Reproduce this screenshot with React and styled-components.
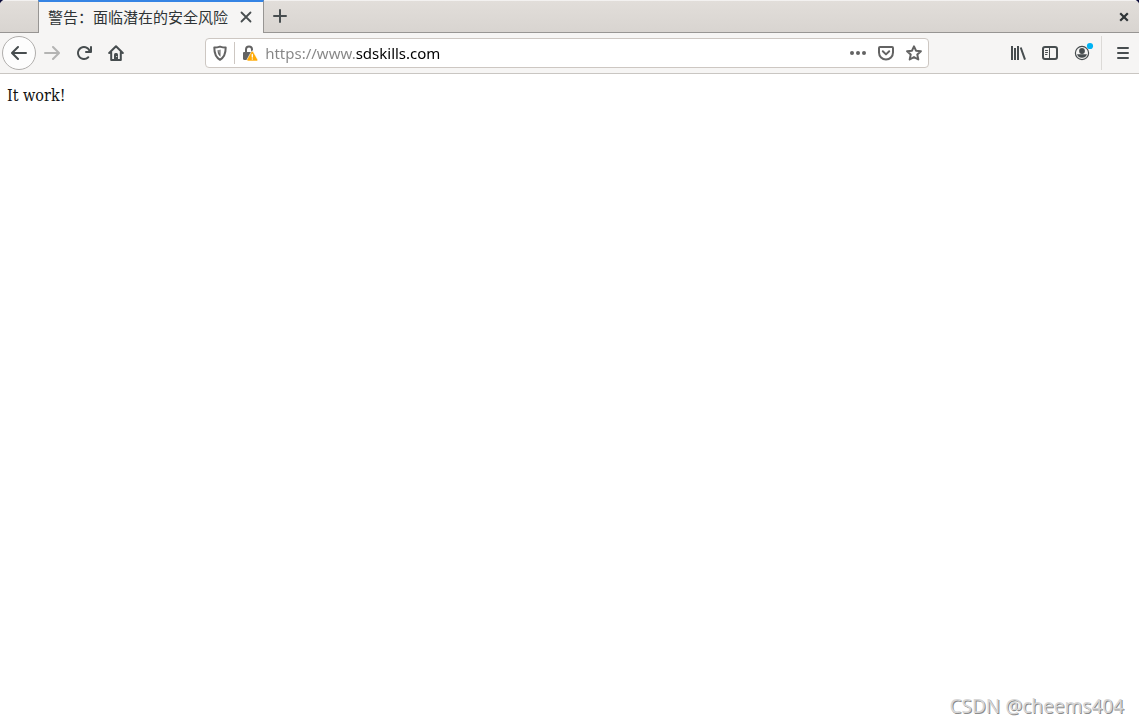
import React, { useState } from "react";
import styled, { createGlobalStyle, css } from "styled-components";

const GlobalStyle = createGlobalStyle`
  * {
    box-sizing: border-box;
  }
  body {
    margin: 0;
    background-color: #ffffff;
  }
`;

const Browser = styled.div`
  position: relative;
  min-height: 100vh;
  display: flex;
  flex-direction: column;
  font-family: "Noto Sans", "Noto Sans CJK SC", sans-serif;
  color: #2e3436;
`;

const TabBar = styled.header`
  height: 33px;
  display: flex;
  background: linear-gradient(#e2deda, #d8d4d0);
  box-shadow: inset 0 1px #f3f1f0, inset 0 -1px #979593;
`;

/* dark desktop showing behind the rounded window corners */
const Corners = styled.div`
  position: absolute;
  inset: 0 0 auto 0;
  height: 6px;
  pointer-events: none;
  background: radial-gradient(circle at 6px 6px, transparent 6px, #0b0b3b 7px)
      left / 6px 6px no-repeat,
    radial-gradient(circle at 0 6px, transparent 6px, #0b0b3b 7px) right / 6px
      6px no-repeat;
`;

const DragSpace = styled.div`
  width: 38px;
`;

const Tab = styled.div`
  width: 226px;
  display: flex;
  align-items: center;
  padding: 0 5px 2px 9px;
  background-color: #f6f5f4;
  border-top: 2px solid #3584e4;
  border-left: 1px solid #979593;
  border-right: 1px solid #979593;
`;

const TabTitle = styled.span`
  flex: 1;
  font-size: 15px;
  line-height: 24px;
  white-space: nowrap;
`;

const IconButton = styled.button`
  flex: none;
  width: ${(props) => props.$size || 32}px;
  height: ${(props) => props.$size || 32}px;
  display: flex;
  justify-content: center;
  align-items: center;
  padding: 0;
  border: none;
  background: none;
  color: ${(props) => props.$color || "#474d4f"};
  ${(props) =>
    props.$round &&
    css`
      margin-left: 2px;
      border: 1px solid #b0aeac;
      border-radius: 50%;
      background-color: #fdfdfd;
    `}
  &:disabled {
    color: #b4b4b3;
  }
`;

const WindowClose = styled(IconButton)`
  width: 30px;
  height: 33px;
  margin-left: auto;
  color: #2e3436;
`;

const NavBar = styled.nav`
  height: 41px;
  display: flex;
  align-items: center;
  background-color: #f6f5f4;
  border-bottom: 1px solid #c9c6c2;
`;

const Spacer = styled.div`
  flex: 1;
`;

const UrlBar = styled.form`
  flex: 10;
  height: 30px;
  display: flex;
  align-items: center;
  margin: 0 1px;
  border: 1px solid #cdc7c2;
  border-radius: 4px;
  background-color: #ffffff;
`;

const UrlDivider = styled.span`
  width: 1px;
  height: 22px;
  background-color: #cdc7c2;
`;

/* the sub-domain part is dimmed, the domain itself stays dark */
const UrlInput = styled.input`
  flex: 1;
  min-width: 0;
  height: 28px;
  padding: 0;
  border: none;
  outline: none;
  font-family: inherit;
  font-size: 15px;
  color: transparent;
  caret-color: #000000;
  background: linear-gradient(90deg, #858585 90px, #000000 90px);
  background-clip: text;
  -webkit-background-clip: text;
`;

const Separator = styled.span`
  width: 1px;
  height: 34px;
  margin: 0 5px 0 3px;
  background-color: #dcdad7;
`;

const Page = styled.main`
  flex: 1;
  padding: 10px 7px;
  font-family: "DejaVu Serif Condensed", "Liberation Serif", serif;
  font-size: 16px;
  line-height: 24px;
  color: #111111;
`;

const Watermark = styled.span`
  position: absolute;
  right: 15px;
  bottom: 4px;
  font-size: 19px;
  line-height: 28px;
  color: #d6d6d6;
  text-shadow: 1px 1px #8c8c8c;
`;

const Icon = ({ size = 16, children }) => (
  <svg
    width={size}
    height={size}
    viewBox="0 0 16 16"
    fill="none"
    stroke="currentColor"
    strokeWidth="2"
    strokeLinecap="round"
    strokeLinejoin="round"
    aria-hidden="true"
  >
    {children}
  </svg>
);

const BackIcon = () => (
  <Icon>
    <path d="M15 8H1.5M7 2L1 8l6 6" />
  </Icon>
);

const ForwardIcon = () => (
  <Icon>
    <path d="M1 8h13.5M9 2l6 6-6 6" />
  </Icon>
);

const ReloadIcon = () => (
  <Icon>
    <path
      stroke="none"
      fill="currentColor"
      d="M15 1a1 1 0 0 0-1 1v2.418A6.995 6.995 0 1 0 8 15a6.954 6.954 0 0 0 4.95-2.05 1 1 0 0 0-1.414-1.414A5.019 5.019 0 1 1 12.549 6H10a1 1 0 0 0 0 2h5a1 1 0 0 0 1-1V2a1 1 0 0 0-1-1z"
    />
  </Icon>
);

const HomeIcon = () => (
  <Icon>
    <path d="M1.2 8L8 1.3 14.8 8M3.2 7.5V15h9.6V7.5" />
    <path
      stroke="none"
      fill="currentColor"
      d="M6 15V9.5A1.5 1.5 0 0 1 7.5 8h1A1.5 1.5 0 0 1 10 9.5V15z"
    />
    <circle cx="8.7" cy="11.5" r=".6" stroke="none" fill="#f6f5f4" />
  </Icon>
);

const ShieldIcon = () => (
  <Icon>
    <path d="M8 1.6c2 .6 3.8.9 5.700 1 0 6-1.400 9.900-5.700 12.200C3.700 12.500 2.300 8.600 2.300 2.600 4.200 2.500 6 2.200 8 1.600z" />
    <path
      stroke="none"
      fill="currentColor"
      d="M8.500 4.600v7.200C6.500 10.300 5.700 8.500 5.500 5.300l1.200-.2c.1 1.800.3 2.800.6 3.600V4.900z"
    />
  </Icon>
);

const LockIcon = () => (
  <Icon>
    <path d="M4 8V4.500a3 3 0 0 1 6 0V6" />
    <path
      stroke="none"
      fill="currentColor"
      d="M2 7h8L6.500 15H2.500A1.500 1.500 0 0 1 1 13.500V8a1 1 0 0 1 1-1z"
    />
    <path
      stroke="#ffffff"
      strokeWidth=".6"
      fill="#ffaa05"
      d="M10.300 6c.4 0 .7.200.9.600l4.400 7.900c.4.700 0 1.500-.9 1.500H5.900c-.9 0-1.300-.8-.9-1.500L9.400 6.600c.2-.4.500-.6.900-.6z"
    />
    <path stroke="#ffffff" strokeWidth="1.300" d="M10.300 9.500v2.500M10.300 14v.1" />
  </Icon>
);

const MoreIcon = () => (
  <Icon>
    <g stroke="none" fill="currentColor">
      <circle cx="2" cy="8" r="2" />
      <circle cx="8" cy="8" r="2" />
      <circle cx="14" cy="8" r="2" />
    </g>
  </Icon>
);

const PocketIcon = () => (
  <Icon>
    <path d="M2 2h12a1 1 0 0 1 1 1v4.500a7 7 0 0 1-14 0V3a1 1 0 0 1 1-1z" />
    <path d="M4.800 6.300L8 9.400l3.200-3.100" />
  </Icon>
);

const StarIcon = () => (
  <Icon>
    <path d="M8 1.300l2 4.400 4.900.5-3.600 3.400 1 4.900L8 12.100l-4.300 2.400 1-4.900L1.100 6.200 6 5.700z" />
  </Icon>
);

const LibraryIcon = () => (
  <Icon>
    <path strokeLinecap="butt" d="M2 1v14M5 3v12M8 1v14M10.700 2.500L15 14.700" />
  </Icon>
);

const SidebarIcon = () => (
  <Icon>
    <rect x="1" y="2" width="14" height="12" rx="2" />
    <path strokeWidth="1" d="M7.500 3v10M3.500 5.500h2M3.500 7.500h2M3.500 9.500h1.500" />
  </Icon>
);

const AccountIcon = () => (
  <svg width="24" height="24" viewBox="0 0 24 24" aria-hidden="true">
    <circle
      cx="12"
      cy="12"
      r="6.600"
      fill="none"
      stroke="currentColor"
      strokeWidth="1.200"
    />
    <circle cx="12" cy="10" r="2.900" fill="currentColor" />
    <path d="M7 13.200h10a5.300 5.300 0 0 1-10 0z" fill="currentColor" />
    <circle cx="20" cy="5" r="3.100" fill="#00b3f4" />
  </svg>
);

const MenuIcon = () => (
  <Icon>
    <path d="M3 3h10M3 8h10M3 13h10" />
  </Icon>
);

const CloseIcon = () => (
  <Icon>
    <path strokeWidth="1.800" d="M3.500 3.500l9 9M12.500 3.500l-9 9" />
  </Icon>
);

const WindowCloseIcon = () => (
  <Icon>
    <path
      strokeLinecap="butt"
      strokeWidth="2.200"
      d="M4.200 4.200l7.600 7.600M11.800 4.200l-7.600 7.600"
    />
  </Icon>
);

const PlusIcon = () => (
  <Icon>
    <path d="M8 2v12M2 8h12" />
  </Icon>
);

const App = () => {
  const [url, setUrl] = useState("https://www.sdskills.com");

  return (
    <Browser>
      <GlobalStyle />
      <TabBar>
        <DragSpace />
        <Tab>
          <TabTitle>警告：面临潜在的安全风险</TabTitle>
          <IconButton $size={24} aria-label="Close tab">
            <CloseIcon />
          </IconButton>
        </Tab>
        <IconButton aria-label="New tab">
          <PlusIcon />
        </IconButton>
        <WindowClose aria-label="Close window">
          <WindowCloseIcon />
        </WindowClose>
      </TabBar>
      <NavBar>
        <IconButton $size={34} $round aria-label="Back">
          <BackIcon />
        </IconButton>
        <IconButton disabled aria-label="Forward">
          <ForwardIcon />
        </IconButton>
        <IconButton aria-label="Reload">
          <ReloadIcon />
        </IconButton>
        <IconButton aria-label="Home">
          <HomeIcon />
        </IconButton>
        <Spacer />
        <UrlBar onSubmit={(event) => event.preventDefault()}>
          <IconButton
            type="button"
            $size={28}
            $color="#636363"
            aria-label="Tracking protection"
          >
            <ShieldIcon />
          </IconButton>
          <UrlDivider />
          <IconButton
            type="button"
            $size={30}
            $color="#636363"
            aria-label="Site information"
          >
            <LockIcon />
          </IconButton>
          <UrlInput
            aria-label="Address"
            spellCheck={false}
            value={url}
            onChange={(event) => setUrl(event.target.value)}
          />
          <IconButton
            type="button"
            $size={28}
            $color="#636363"
            aria-label="Page actions"
          >
            <MoreIcon />
          </IconButton>
          <IconButton
            type="button"
            $size={28}
            $color="#636363"
            aria-label="Save to Pocket"
          >
            <PocketIcon />
          </IconButton>
          <IconButton
            type="button"
            $size={28}
            $color="#636363"
            aria-label="Bookmark"
          >
            <StarIcon />
          </IconButton>
        </UrlBar>
        <Spacer />
        <IconButton aria-label="Library">
          <LibraryIcon />
        </IconButton>
        <IconButton aria-label="Sidebar">
          <SidebarIcon />
        </IconButton>
        <IconButton aria-label="Account">
          <AccountIcon />
        </IconButton>
        <Separator />
        <IconButton aria-label="Menu">
          <MenuIcon />
        </IconButton>
      </NavBar>
      <Page>It work!</Page>
      <Corners />
      <Watermark>CSDN @cheems404</Watermark>
    </Browser>
  );
};

export default App;
